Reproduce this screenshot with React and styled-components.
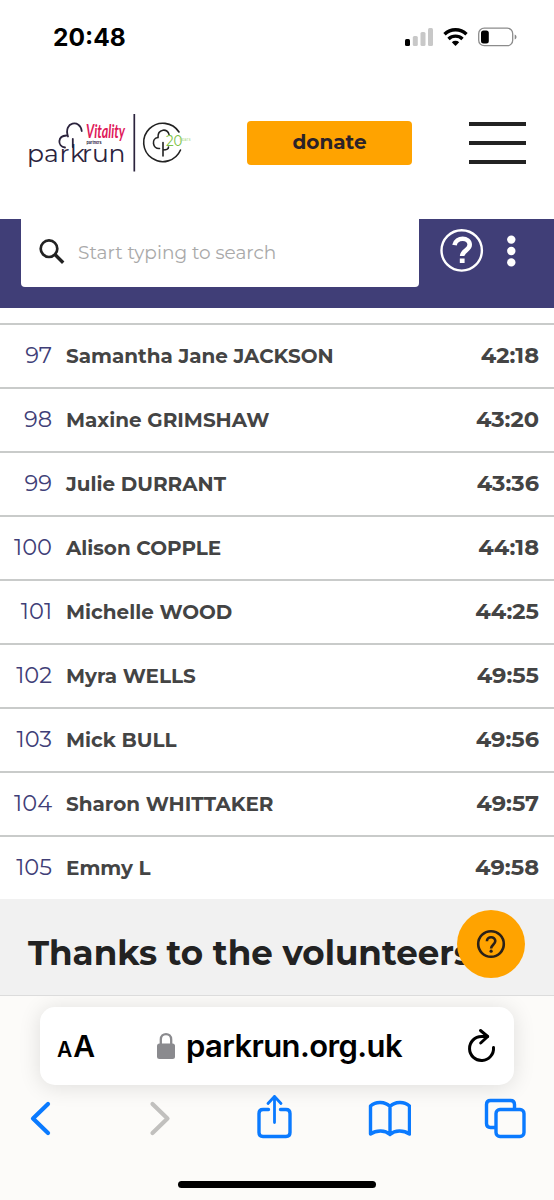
import React from "react";
import styled, { createGlobalStyle } from "styled-components";

const GlobalStyle = createGlobalStyle`
  * {
    box-sizing: border-box;
  }
  body {
    margin: 0;
    background: #fff;
    font-family: Montserrat, Inter, sans-serif;
    color: #444;
  }
  svg {
    display: block;
    flex: none;
  }
`;

const Page = styled.div`
  width: 554px;
  height: 1200px;
  display: flex;
  flex-direction: column;
  overflow: hidden;
  background: #fff;
`;

const StatusBar = styled.div`
  height: 74px;
  flex: none;
  display: flex;
  justify-content: space-between;
  align-items: center;
  padding: 0 36px 0 53px;
`;

const Clock = styled.div`
  font-family: Inter, sans-serif;
  font-size: 24.5px;
  font-weight: 700;
  color: #000;
`;

const Header = styled.header`
  height: 145px;
  flex: none;
  display: flex;
  align-items: flex-start;
  padding: 39px 28px 0;
`;

const DonateButton = styled.button`
  width: 165px;
  height: 44px;
  margin: 8px 0 0 56px;
  padding: 0 0 2px;
  border: 0;
  border-radius: 4px;
  background: #ffa300;
  color: #2b2228;
  font-family: inherit;
  font-size: 20px;
  font-weight: 700;
`;

const Burger = styled.div`
  width: 57px;
  height: 42px;
  margin: 9px 0 0 57px;
  display: flex;
  flex-direction: column;
  justify-content: space-between;
`;

const BurgerLine = styled.span`
  height: 4px;
  background: #222;
`;

const SearchBar = styled.div`
  height: 89px;
  flex: none;
  display: flex;
  align-items: flex-start;
  padding-left: 21px;
  background: #403e77;
`;

const SearchBox = styled.div`
  width: 398px;
  height: 68px;
  display: flex;
  align-items: center;
  padding: 0 0 3px 18px;
  border-radius: 0 0 4px 4px;
  background: #fff;
`;

const Placeholder = styled.span`
  margin: 1px 0 0 13px;
  font-size: 18.5px;
  color: #a9a9a9;
`;

const SearchActions = styled.div`
  display: flex;
  align-items: center;
  gap: 22px;
  padding: 10px 0 0 21px;
`;

const Results = styled.div`
  height: 591px;
  flex: none;
  padding-top: 15px;
`;

const Row = styled.div`
  height: 64px;
  display: flex;
  align-items: center;
  border-top: 2px solid #c9cbca;
  padding-right: 15px;
`;

const Position = styled.span`
  width: 52px;
  margin-top: -2px;
  text-align: right;
  font-size: 22.5px;
  font-weight: 400;
  color: #403e77;
`;

const Name = styled.span`
  flex: 1;
  margin-left: 14px;
  font-size: 19.950px;
  font-weight: 700;
  white-space: nowrap;
`;

const Time = styled.span`
  margin-top: -2px;
  font-size: 22.5px;
  font-weight: 700;
`;

const Thanks = styled.section`
  position: relative;
  height: 97px;
  flex: none;
  padding-left: 28px;
  display: flex;
  align-items: center;
  background: #f1f1f1;
  border-bottom: 1px solid #dcdcdc;
`;

const ThanksTitle = styled.h2`
  margin: 11px 0 0;
  font-size: 34.1px;
  font-weight: 700;
  color: #222;
  white-space: nowrap;
`;

const HelpBubble = styled.div`
  position: absolute;
  top: 11px;
  right: 29px;
  width: 68px;
  height: 68px;
  border-radius: 50%;
  background: #ffa300;
  display: flex;
  align-items: center;
  justify-content: center;
`;

const Browser = styled.div`
  flex: 1;
  display: flex;
  flex-direction: column;
  align-items: center;
  padding-top: 11px;
  background: #fcfbf9;
`;

const AddressBar = styled.div`
  width: 474px;
  height: 78px;
  flex: none;
  display: flex;
  align-items: center;
  padding: 0 17px;
  border-radius: 15px;
  background: #fff;
  box-shadow: 0 2px 22px rgba(0, 0, 0, 0.12);
`;

const TextSize = styled.div`
  width: 99px;
  display: flex;
  align-items: baseline;
  gap: 1px;
  color: #000;
  font-family: Inter, sans-serif;
  font-weight: 600;
`;

const Letter = styled.span`
  font-size: ${({ $size }) => $size}px;
`;

const Address = styled.div`
  flex: 1;
  display: flex;
  align-items: center;
  gap: 10px;
  margin-top: -1px;
  color: #000;
  font-family: Inter, sans-serif;
  font-size: 31px;
  font-weight: 600;
  letter-spacing: -0.6px;
`;

const Toolbar = styled.nav`
  width: 100%;
  display: flex;
  justify-content: space-between;
  padding: 9px 27px 0 18px;
`;

const ToolIcon = styled.svg`
  width: 44px;
  height: 48px;
  fill: none;
  stroke: ${({ $disabled }) => ($disabled ? "#c1c0be" : "#0a7aff")};
  stroke-width: ${({ $stroke }) => $stroke || 3.4};
  stroke-linecap: round;
  stroke-linejoin: round;
`;

const HomeIndicator = styled.div`
  width: 198px;
  height: 7px;
  margin: auto 0 12px;
  border-radius: 4px;
  background: #000;
`;

const results = [
  { position: "97", name: "Samantha Jane JACKSON", time: "42:18" },
  { position: "98", name: "Maxine GRIMSHAW", time: "43:20" },
  { position: "99", name: "Julie DURRANT", time: "43:36" },
  { position: "100", name: "Alison COPPLE", time: "44:18" },
  { position: "101", name: "Michelle WOOD", time: "44:25" },
  { position: "102", name: "Myra WELLS", time: "49:55" },
  { position: "103", name: "Mick BULL", time: "49:56" },
  { position: "104", name: "Sharon WHITTAKER", time: "49:57" },
  { position: "105", name: "Emmy L", time: "49:58" },
];

const Logo = () => (
  <svg width="163" height="60" viewBox="0 0 163 60" fill="none">
    <g stroke="#2b233d" strokeWidth="1.8" strokeLinecap="round">
      <path d="M37 34.500C29 33 29.500 23 38.500 22.500" />
      <path d="M40 23.500C35 8.500 52.500 6 53.700 18" />
      <path d="M44.800 26v8" />
    </g>
    <text x="-1 16 31.500 42 54 64 80.500" y="49" fontFamily="Montserrat, Inter, sans-serif" fontSize="25" fill="#2b233d">
      parkrun
    </text>
    <text x="58" y="25" fontFamily="Lato, sans-serif" fontSize="18.500" fontStyle="italic" fontWeight="700" fill="#e0195a" textLength="39" lengthAdjust="spacingAndGlyphs">
      Vitality
    </text>
    <text x="58.500" y="30.500" fontFamily="Inter, sans-serif" fontSize="3.800" fontWeight="700" fill="#2b233d" textLength="15" lengthAdjust="spacingAndGlyphs">
      partners
    </text>
    <path d="M106.300 1v57.500" stroke="#2b233d" strokeWidth="1.700" />
    <g stroke="#222" strokeWidth="1.600" strokeLinecap="round">
      <path d="M151 19A19.200 19.200 0 1 0 152.500 37" />
      <path d="M131.500 35.500c-7 .5-8.500-10-1.500-11-.5-9 10-9.500 11-3" />
      <path d="M135 43V29.500M135 37c4.500 0 5.500-1.500 5.500-3" />
    </g>
    <text x="138" y="33" fontFamily="Montserrat, Inter, sans-serif" fontSize="14.500" fill="#7ac143" textLength="16.500" lengthAdjust="spacingAndGlyphs">
      20
    </text>
    <text x="151.500" y="28" fontFamily="Inter, sans-serif" fontSize="4" fill="#a5d67c" textLength="11">
      years
    </text>
  </svg>
);

const StatusIcons = () => (
  <svg width="113" height="22" viewBox="0 0 113 22">
    <rect x="0" y="13" width="5" height="7" rx="1.500" fill="#000" />
    <rect x="7.800" y="10" width="5" height="10" rx="1.500" fill="#c8c8c8" />
    <rect x="15.500" y="6" width="5" height="14" rx="1.500" fill="#c8c8c8" />
    <rect x="23" y="2" width="5" height="18" rx="1.500" fill="#c8c8c8" />
    <g fill="none" stroke="#000" strokeWidth="3.400">
      <path d="M39.500 8.200a16 16 0 0 1 22 0" />
      <path d="M43.500 12.900a10.200 10.200 0 0 1 14 0" />
    </g>
    <path d="M46.800 16.200a5.500 5.500 0 0 1 7.400 0l-3.700 3.800z" fill="#000" />
    <rect x="73.700" y="2.200" width="34" height="17.500" rx="5.500" fill="none" stroke="#8c8c8c" strokeWidth="1.300" />
    <rect x="76" y="4.500" width="7.800" height="13" rx="2.500" fill="#000" />
    <path d="M109.700 8.500c2.400 1 2.400 4 0 5z" fill="#888" />
  </svg>
);

const SearchIcon = () => (
  <svg width="26" height="26" viewBox="0 0 26 26" fill="none" stroke="#222">
    <circle cx="10" cy="9.700" r="8.300" strokeWidth="2.700" />
    <path d="M16 15.500l8.200 8.200" strokeWidth="3.400" />
  </svg>
);

const HelpIcon = () => (
  <svg width="44" height="44" viewBox="0 0 44 44" fill="none" stroke="#fff">
    <circle cx="21.700" cy="21.400" r="20.200" strokeWidth="2.400" />
    <path d="M14.500 16.200C16 7.500 29.700 7.800 29.700 15.800 29.700 21.300 22.200 21.300 22.200 27" strokeWidth="4.600" />
    <path d="M22.200 29.500v4.500" strokeWidth="4.800" />
  </svg>
);

const DotsIcon = () => (
  <svg width="10" height="32" viewBox="0 0 10 32" fill="#fff">
    <circle cx="5.300" cy="4.600" r="4.200" />
    <circle cx="5.300" cy="16" r="4.200" />
    <circle cx="5.300" cy="27.400" r="4.200" />
  </svg>
);

const BubbleIcon = () => (
  <svg width="30" height="30" viewBox="0 0 30 30" fill="none" stroke="#2b2118" strokeWidth="2.600">
    <circle cx="15" cy="15" r="12.800" />
    <path d="M10.900 12.200c0-5.300 8.400-5.300 8.400-.1 0 3.500-4.200 3.900-4.200 7.400" />
    <circle cx="15.100" cy="22.200" r="1.600" fill="#2b2118" stroke="none" />
  </svg>
);

const LockIcon = () => (
  <svg width="20" height="28" viewBox="0 0 20 28">
    <rect x="1" y="11.500" width="18" height="15.500" rx="2.500" fill="#8a8a8e" />
    <path d="M4.800 13V7.500c0-7.200 10.400-7.200 10.400 0V13" fill="none" stroke="#8a8a8e" strokeWidth="2.300" />
  </svg>
);

const ReloadIcon = () => (
  <svg width="30" height="36" viewBox="0 0 30 36" fill="none" stroke="#000" strokeWidth="3" strokeLinecap="round" strokeLinejoin="round">
    <path d="M26.500 19.500A12 12 0 1 1 14.500 8.500h6" />
    <path d="M13.500 2.500l7.200 6-7 6.500" />
  </svg>
);

const App = () => {
  return (
    <>
      <GlobalStyle />
      <Page>
        <StatusBar>
          <Clock>20:48</Clock>
          <StatusIcons />
        </StatusBar>

        <Header>
          <Logo />
          <DonateButton>donate</DonateButton>
          <Burger>
            <BurgerLine />
            <BurgerLine />
            <BurgerLine />
          </Burger>
        </Header>

        <SearchBar>
          <SearchBox>
            <SearchIcon />
            <Placeholder>Start typing to search</Placeholder>
          </SearchBox>
          <SearchActions>
            <HelpIcon />
            <DotsIcon />
          </SearchActions>
        </SearchBar>

        <Results>
          {results.map((item) => (
            <Row key={item.position}>
              <Position>{item.position}</Position>
              <Name>{item.name}</Name>
              <Time>{item.time}</Time>
            </Row>
          ))}
        </Results>

        <Thanks>
          <ThanksTitle>Thanks to the volunteers</ThanksTitle>
          <HelpBubble>
            <BubbleIcon />
          </HelpBubble>
        </Thanks>

        <Browser>
          <AddressBar>
            <TextSize>
              <Letter $size={21}>A</Letter>
              <Letter $size={30}>A</Letter>
            </TextSize>
            <Address>
              <LockIcon />
              parkrun.org.uk
            </Address>
            <ReloadIcon />
          </AddressBar>
          <Toolbar>
            <ToolIcon viewBox="0 0 44 48" $stroke={4.2}>
              <path d="M30 10L15 24.500 30 39" />
            </ToolIcon>
            <ToolIcon viewBox="0 0 44 48" $stroke={4.2} $disabled>
              <path d="M18.500 10l15 14.500-15 14.500" />
            </ToolIcon>
            <ToolIcon viewBox="0 0 44 48">
              <path d="M17.500 15.500H12q-4 0-4 4v19q0 4 4 4h23q4 0 4-4v-19q0-4-4-4h-5.500" />
              <path d="M23.500 28.500V2.500M17 9.500l6.500-7 6.500 7" strokeWidth="2.800" />
            </ToolIcon>
            <ToolIcon viewBox="0 0 44 48">
              <path d="M23 12.500C18 7.500 9 7 3.500 12V40c6-4 14.500-4 19.500.500 5-4.500 13.500-4.500 19.500-.500V12C37 7 28 7.500 23 12.500V40" />
            </ToolIcon>
            <ToolIcon viewBox="0 0 44 48">
              <rect x="13" y="15.500" width="28" height="27" rx="4" />
              <path d="M12 33.500H7.500q-4 0-4-4v-19q0-4 4-4h20q4 0 4 4v4.500" />
            </ToolIcon>
          </Toolbar>
          <HomeIndicator />
        </Browser>
      </Page>
    </>
  );
};

export default App;
